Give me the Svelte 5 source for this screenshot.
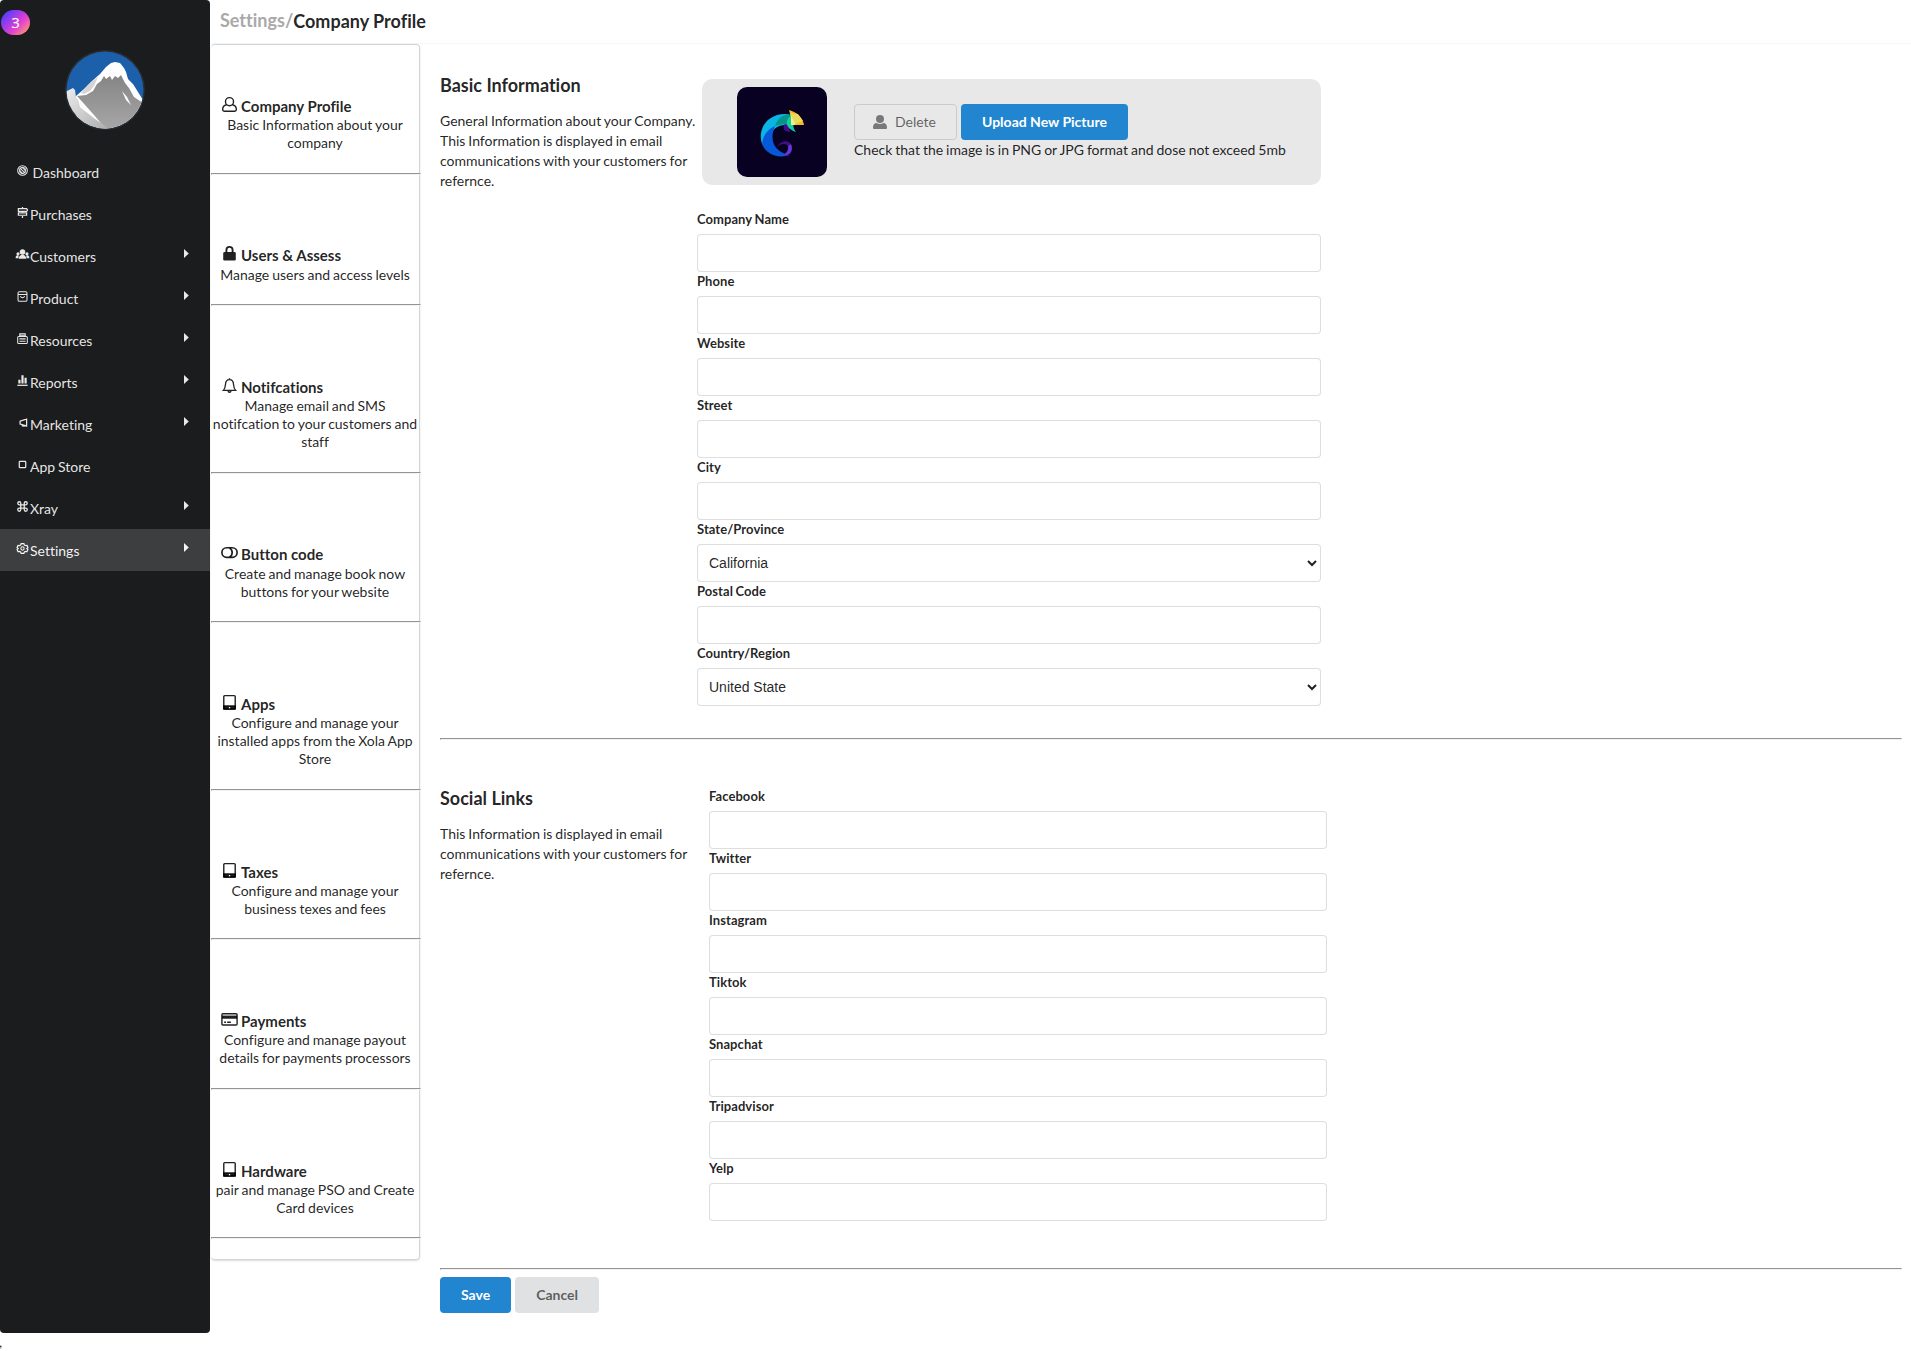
<script>
  const nav = [
    { label: 'Dashboard', icon: 'dashboard', gap: true },
    { label: 'Purchases', icon: 'sign' },
    { label: 'Customers', icon: 'users', more: true },
    { label: 'Product', icon: 'box', more: true },
    { label: 'Resources', icon: 'printer', more: true },
    { label: 'Reports', icon: 'chart', more: true },
    { label: 'Marketing', icon: 'horn', more: true },
    { label: 'App Store', icon: 'square' },
    { label: 'Xray', icon: 'command', more: true },
    { label: 'Settings', icon: 'gear', more: true, active: true }
  ];
  const tiles = [
    { title: 'Company Profile', icon: 'person', text: 'Basic Information about your company' },
    { title: 'Users & Assess', icon: 'lock', text: 'Manage users and access levels' },
    { title: 'Notifcations', icon: 'bell', text: 'Manage email and SMS notifcation to your customers and staff' },
    { title: 'Button code', icon: 'toggle', text: 'Create and manage book now buttons for your website' },
    { title: 'Apps', icon: 'tablet', text: 'Configure and manage your installed apps from the Xola App Store' },
    { title: 'Taxes', icon: 'tablet', text: 'Configure and manage your business texes and fees' },
    { title: 'Payments', icon: 'card', text: 'Configure and manage payout details for payments processors' },
    { title: 'Hardware', icon: 'tablet', text: 'pair and manage PSO and Create Card devices' }
  ];
  const basic = [
    { label: 'Company Name' },
    { label: 'Phone' },
    { label: 'Website' },
    { label: 'Street' },
    { label: 'City' },
    { label: 'State/Province', value: 'California' },
    { label: 'Postal Code' },
    { label: 'Country/Region', value: 'United State' }
  ];
  const social = ['Facebook', 'Twitter', 'Instagram', 'Tiktok', 'Snapchat', 'Tripadvisor', 'Yelp'];
</script>

{#snippet icon(name)}
  <svg class="icon" viewBox="0 0 16 16" fill="none" stroke="currentColor" stroke-width="1.5">
    {#if name === 'dashboard'}
      <circle cx="8" cy="8" r="7" /><circle cx="8" cy="8" r="4.3" /><path d="M5 5l6 6M8 4l4 4M4 8l4 4" />
    {:else if name === 'sign'}
      <path d="M8 0v2.5M8 13v3M2 2.5h12l1.300 2L14 6.500H2zM2 8.500h12V12H2zM8 6.500v2" stroke-width="1.800" />
    {:else if name === 'users'}
      <g fill="currentColor" stroke="none"><circle cx="8" cy="4.200" r="4" /><circle cx="1.500" cy="7" r="2.300" /><circle cx="14.500" cy="7" r="2.300" /><path d="M2.500 14c0-7.500 11-7.500 11 0zM-2 13.500c-.3-4.500 3-5 4.500-3.800L2 13.500zM18 13.500c.3-4.500-3-5-4.500-3.800l.5 3.800z" /></g>
    {:else if name === 'box'}
      <rect x="1.500" y="1" width="13" height="14" rx="2" /><path d="M1.500 5h13M5 7.500c1 3 5 3 6 0" />
    {:else if name === 'printer'}
      <path d="M4 5V1.200h8V5M4 3.200h8" /><rect x="1" y="5" width="14" height="10.200" rx="1.500" /><path d="M3.500 8.500h9M3.500 12h9" stroke-width="1.700" />
    {:else if name === 'chart'}
      <path d="M.5 15h15" stroke-width="1.800" /><path d="M3.500 12.500V7M8 12.500V.5M12.500 12.500V4" stroke-width="3.200" />
    {:else if name === 'horn'}
      <path d="M14 2v12M13.500 3L4.500 6.200v4l9 2.800M7 10.800l1 2.200 3 .2" stroke-width="1.800" />
    {:else if name === 'square'}
      <rect x="3.300" y="3.300" width="9.400" height="9.400" rx="1" stroke-width="1.800" />
    {:else if name === 'command'}
      <path d="M5.500 5.500h5v5h-5zM5.500 5.500H3.200a2.200 2.200 0 1 1 2.300-2.200zM10.500 5.500V3.200a2.200 2.200 0 1 1 2.300 2.300zM5.500 10.500v2.300a2.200 2.200 0 1 1-2.300-2.300zM10.500 10.500h2.300a2.200 2.200 0 1 1-2.300 2.300z" stroke-width="1.900" />
    {:else if name === 'gear'}
      <path d="M6 1h4l.7 2 2 .9 2-.4 1.200 3.200L14.300 8l1.600 1.400-1.300 3.200-2.100-.4-1.800.9L10 15H6l-.8-1.900-1.800-.9-2 .4L.1 9.400 1.700 8 .1 6.600l1.300-3.100 2 .4 1.900-.9z" stroke-width="1.700" /><circle cx="8" cy="8" r="2.400" />
    {:else if name === 'person'}
      <circle cx="8" cy="5" r="4.300" /><path d="M4.900 8.300C2 8.900.7 10.800.7 13.400c0 1.200.6 1.800 1.700 1.800h11.200c1.100 0 1.700-.6 1.700-1.800 0-2.600-1.300-4.500-4.200-5.100" />
    {:else if name === 'lock'}
      <path d="M4.700 7V4.200a3.300 3.300 0 0 1 6.600 0V7" stroke-width="2" /><rect x="1.300" y="6.500" width="13.400" height="9" rx="1.500" fill="currentColor" stroke="none" />
    {:else if name === 'bell'}
      <path d="M8 .2v1.500M1.500 13.200h13c-1.700-1.600-2-3.600-2.200-6.200C12.200 4 10.400 1.800 8 1.800S3.800 4 3.700 7c-.2 2.600-.5 4.600-2.200 6.200zM6.400 13.500c.2 2.300 3 2.300 3.200 0" stroke-width="1.400" />
    {:else if name === 'toggle'}
      <rect x="-.1" y="2.900" width="16.200" height="10.200" rx="5.100" stroke-width="1.800" /><path d="M8 3.100c3.800 2 3.800 7.800 0 9.800" stroke-width="1.800" />
    {:else if name === 'tablet'}
      <rect x="1.900" y=".7" width="12.200" height="14.200" rx="1" /><path d="M1.900 11.800h12.200v3.100H1.900z" fill="currentColor" /><path d="M7.300 13.500h1.400" stroke="#fff" />
    {:else if name === 'card'}
      <rect x="-.1" y="1.800" width="16.200" height="12" rx="1" /><path d="M0 5.500h16" stroke-width="3.400" /><path d="M2.300 11h2M5.500 11h4" />
    {/if}
  </svg>
{/snippet}

<div class="page">
  <aside class="sidebar">
    <span class="badge">3</span>
    <svg class="avatar" viewBox="0 0 80 80">
      <defs>
        <clipPath id="round"><circle cx="40" cy="40" r="38.500" /></clipPath>
        <linearGradient id="rock" x2="0" y2="1"><stop offset="0" stop-color="#858585" /><stop offset="1" stop-color="#a9a9a9" /></linearGradient>
        <linearGradient id="slope" x2="1" y2="1"><stop offset="0" stop-color="#ededed" /><stop offset="1" stop-color="#a6a6a6" /></linearGradient>
      </defs>
      <circle cx="40" cy="40" r="40" fill="#2b2c2e" />
      <g clip-path="url(#round)">
        <path fill="#1c5fab" d="M0 0h80v80H0z" />
        <path fill="#fff" d="M11 46l8-7 8-8 8-7 6-7 5-4 4-1 5 1 4 5 2 4 2 7 5 5 5 8 5 8v30H11z" />
        <path fill="#d4d4d4" d="M16 43l9-10 8-6-4 9-4 5-6 3z" />
        <path fill="url(#rock)" d="M12 46l9-1 7-4 4-7 4-3 3-5 2 3 4-3 2 4 3-4 3 2 3-3 4 8 4 5 5 9 9 6v30H44L29 65z" />
        <path fill="url(#slope)" d="M0 42l8-4 2 2 1 7 5 7 4 7 10 8 10 7 8 8H0z" />
        <path fill="#fff" d="M13 49l4 7 4 6-6-5zM57 41l5 6 4 8-5-5z" />
      </g>
    </svg>
    <nav>
      {#each nav as item}
        <a class:active={item.active} class:gap={item.gap}>
          {@render icon(item.icon)}<span>{item.label}</span>
          {#if item.more}<svg class="caret" viewBox="0 0 5 9"><path fill="currentColor" d="M0 0l4.800 4.500L0 9z" /></svg>{/if}
        </a>
      {/each}
    </nav>
  </aside>

  <div class="main">
    <header><span class="muted">Settings/</span><span>Company Profile</span></header>
    <div class="columns">
      <section class="tiles">
        {#each tiles as tile}
          <div class="tile {tile.icon}">
            <h4>{@render icon(tile.icon)}{tile.title}</h4>
            <p>{tile.text}</p>
          </div>
          <hr />
        {/each}
      </section>

      <main>
        <section class="block">
          <div class="intro">
            <h3>Basic Information</h3>
            <p>General Information about your Company. This Information is displayed in email communications with your customers for refernce.</p>
          </div>
          <div class="basic">
            <div class="upload">
              <svg class="logo" viewBox="0 0 90 90">
                <rect width="90" height="90" rx="10" fill="#080122" />
                <path fill="#0ab4e3" d="M25 57C19 39 35 23 55 28l-4 10C40 37 34 43 34 51z" />
                <path fill="#06958b" d="M38 39c3-8 8-12 15-11l5 10c-7-2-14-1-20 1z" />
                <path fill="#0757d9" d="M25 57c1-9 6-15 13-18-6 14-1 26 15 29-13 4-24-1-28-11z" />
                <path fill="#3f0e87" d="M48 37c-3 4-1 8 5 8l-1-7zM40 60c3-7 15-9 15 2 0 5-4 7-9 7 6-3 8-8 4-11-3-2-7-1-10 2z" />
                <path fill="#6739d8" d="M54 57c3 7-2 12-9 12 4-2 7-6 6-10z" />
                <path fill="#12cf9d" d="M55 28c-7 4-8 13 4 17-3-4-3-7-2-10z" />
                <path fill="#f7b928" d="M52 23c8 2 14 8 15 15H56z" />
                <path fill="#f0f08d" d="M54 28l7-1-3 11h-4z" />
                <path fill="#e8dc58" d="M53 26l8 1 5 7-8 3z" />
              </svg>
              <div class="actions">
                <div class="buttons">
                  <button class="outline"><svg class="user" viewBox="0 0 14 14" fill="currentColor"><circle cx="7" cy="4" r="4" /><path d="M0 12.500C0 9.500 1.500 8 3.500 8c2 1.300 5 1.300 7 0 2 0 3.500 1.500 3.500 4.500 0 1-.5 1.500-1.500 1.500h-11C.5 14 0 13.500 0 12.500z" /></svg>Delete</button>
                  <button class="primary">Upload New Picture</button>
                </div>
                <span>Check that the image is in PNG or JPG format and dose not exceed 5mb</span>
              </div>
            </div>
            <div class="fields">
              {#each basic as field}
                <label>{field.label}
                  {#if field.value}
                    <select><option>{field.value}</option></select>
                  {:else}
                    <input type="text" />
                  {/if}
                </label>
              {/each}
            </div>
          </div>
        </section>
        <hr />
        <section class="block second">
          <div class="intro">
            <h3>Social Links</h3>
            <p>This Information is displayed in email communications with your customers for refernce.</p>
          </div>
          <div class="fields social">
            {#each social as name}
              <label>{name}<input type="text" /></label>
            {/each}
          </div>
        </section>
        <hr />
        <div class="buttons footer">
          <button class="primary">Save</button>
          <button class="secondary">Cancel</button>
        </div>
      </main>
    </div>
  </div>
</div>
<div class="tail">,</div>

<style>
  :global(body) { overflow: hidden; background: #fff; }
  :global(#app) {
    font: 14px/18px Lato, sans-serif;
    font-variant-ligatures: none;
    word-spacing: -.65px;
    color: rgba(0, 0, 0, .87);
    height: 1351px;
    overflow: hidden;
  }
  * { box-sizing: border-box; }
  h3, h4, p { margin: 0; }
  .page { display: flex; height: 1333px; }
  .icon { overflow: visible; flex: none; }

  .sidebar {
    width: 210px;
    flex: none;
    background: #1b1c1d;
    border-radius: 4px;
    color: rgba(255, 255, 255, .9);
    display: flex;
    flex-direction: column;
    padding-top: 10px;
  }
  .badge {
    width: 29px;
    height: 25px;
    margin-left: 1px;
    border-radius: 12.5px;
    background: linear-gradient(135deg, #4d3dff 10%, #e23fd3 60%, #ffa06a 95%);
    color: #fff;
    font: 15px/25px "Noto Sans", sans-serif;
    text-align: center;
  }
  .avatar { width: 80px; height: 80px; margin: 15px auto 21px; }
  nav a { display: flex; align-items: center; height: 42px; padding: 2px 21px 0 17px; }
  nav a.active { background: #3d3e3f; color: rgba(255, 255, 255, .95); }
  nav .icon { width: 11px; height: 11px; margin: -5px 2px 0 0; }
  nav .gap .icon { margin-right: 4.500px; }
  .caret { width: 5px; height: 9px; margin: -7px 0 0 auto; }

  .main { flex: 1; min-width: 0; }
  header {
    height: 44px;
    padding: 9px 10px 0;
    border-bottom: 1px solid #f0f8ff;
    font-size: 18px;
    line-height: 24px;
    font-weight: 700;
    word-spacing: 0;
    display: flex;
  }
  .muted { color: #a9a9a9; margin-top: -1px; }
  .columns { display: flex; align-items: flex-start; }

  .tiles {
    width: 209px;
    height: 1216px;
    margin-left: 1px;
    border: 1px solid #d4d4d5;
    border-left-width: 0;
    border-radius: 4px;
    box-shadow: 0 1px 2px rgba(34, 36, 38, .15);
  }
  hr { margin: 0; border: 1px solid; border-color: #949494 #f2f2f2 #f2f2f2 #949494; }
  .tiles hr { width: 210px; }
  .tile { height: 147px; padding-top: 71px; }
  .tile.person { height: 128px; padding-top: 51px; }
  .tile.lock { height: 129px; }
  .tile.bell, .tile:nth-child(9) { height: 166px; }
  .tile.card { height: 148px; }
  h4 {
    display: flex;
    margin-bottom: -1px;
    padding-left: 11px;
    font-size: 15px;
    line-height: 21px;
    font-weight: 700;
    word-spacing: 0;
  }
  .lock, .toggle { padding-top: 70px; }
  .lock h4, .toggle h4 { margin-bottom: 0; }
  h4 .icon { width: 15px; height: 15px; margin: 1px 4px 0 0; }
  .tile p { text-align: center; }

  main { flex: 1; margin: 0 9px 0 20px; }
  .block { display: flex; height: 694px; padding-top: 30px; }
  .intro { width: 257px; }
  h3 { font-size: 18px; line-height: 23px; word-spacing: 0; }
  .intro p { line-height: 20px; margin: 14px -3px 0 0; }
  .basic { width: 624px; padding-top: 5px; }
  .upload {
    display: flex;
    align-items: center;
    height: 106px;
    margin-left: 5px;
    padding-left: 35px;
    background: #e8e8e8;
    border-radius: 10px;
  }
  .logo { width: 90px; height: 90px; margin-right: 27px; }
  .actions { line-height: 20px; }
  .buttons { display: flex; gap: 4px; }
  button {
    height: 36px;
    padding: 0 21px;
    border: 0;
    border-radius: 4px;
    font: 700 14px/14px Lato, sans-serif;
  }
  .outline {
    display: flex;
    align-items: center;
    width: 103px;
    padding: 0 18px;
    border: 1px solid #cacbcb;
    background: transparent;
    color: rgba(0, 0, 0, .6);
    font-weight: 400;
  }
  .user { width: 14px; height: 14px; margin-right: 8px; opacity: .8; }
  .primary { background: #2185d0; color: #fff; }
  .secondary { background: #e0e1e2; color: rgba(0, 0, 0, .6); }
  .fields { display: flex; flex-direction: column; padding-top: 25px; }
  label {
    display: flex;
    flex-direction: column;
    gap: 6px;
    height: 62px;
    font-size: 13px;
    line-height: 18px;
    font-weight: 700;
    letter-spacing: .06px;
  }
  input, select {
    width: 100%;
    height: 38px;
    padding: 0 14px;
    border: 1px solid rgba(34, 36, 38, .15);
    border-radius: 4px;
    background: #fff;
    color: rgba(0, 0, 0, .87);
    font: 14px "Liberation Sans", sans-serif;
  }
  select { padding: 0 4px 0 7px; letter-spacing: 0; }
  .second { height: 528px; padding-top: 47px; }
  .social { width: 618px; margin-left: 12px; padding-top: 0; }
  .footer { padding-top: 7px; }
  .tail { line-height: 18px; margin-left: -1px; }
</style>
